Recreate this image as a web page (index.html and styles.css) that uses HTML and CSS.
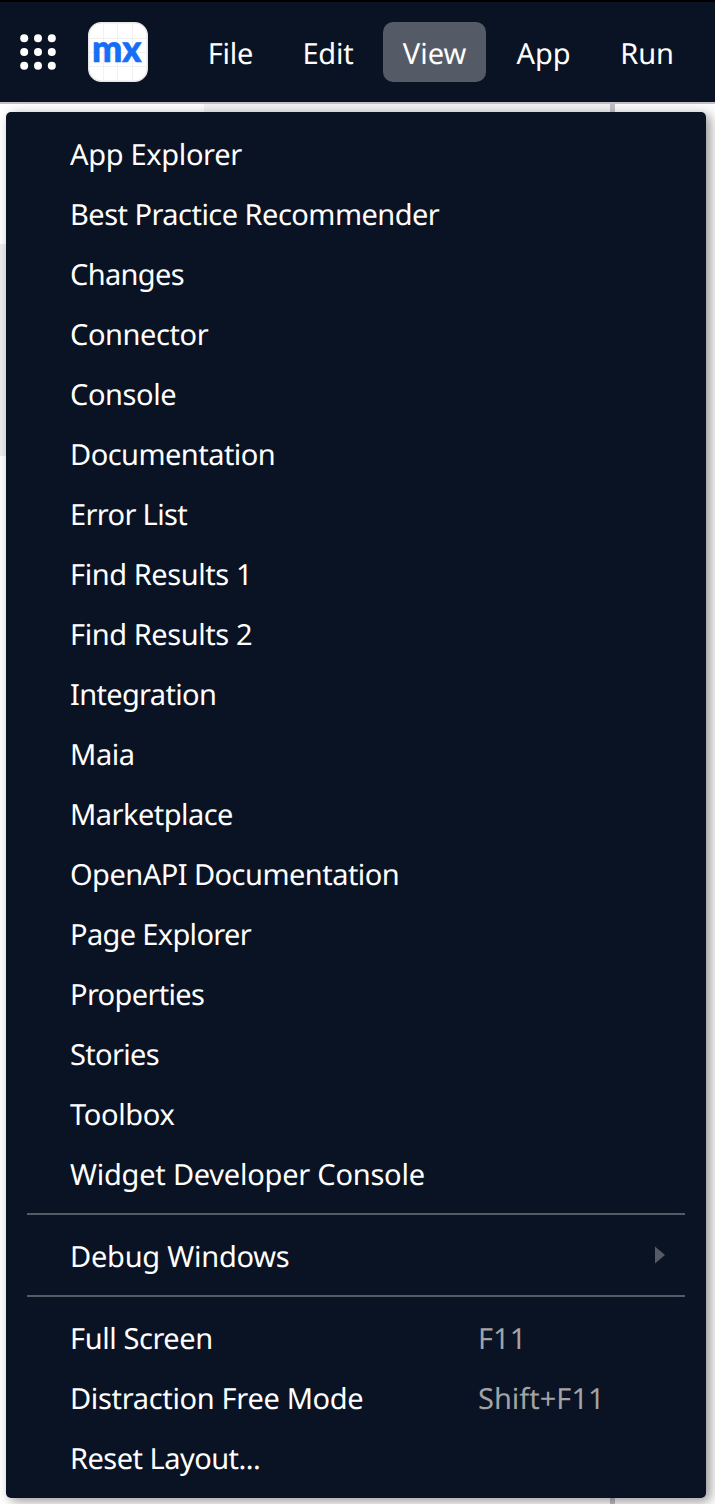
FILE: index.html
```html
<!DOCTYPE html>
<html lang="en">
<head>
<meta charset="utf-8">
<title>View menu</title>
<link rel="stylesheet" href="styles.css">
</head>
<body>
<div class="window">
  <header class="bar">
    <svg class="grid-icon" width="36" height="36" viewBox="0 0 36 36" fill="#fff">
      <circle cx="4.2" cy="4.2" r="4"/><circle cx="18" cy="4.2" r="4"/><circle cx="31.8" cy="4.2" r="4"/>
      <circle cx="4.2" cy="18" r="4"/><circle cx="18" cy="18" r="4"/><circle cx="31.8" cy="18" r="4"/>
      <circle cx="4.2" cy="31.8" r="4"/><circle cx="18" cy="31.8" r="4"/><circle cx="31.8" cy="31.8" r="4"/>
    </svg>
    <svg class="logo" width="60" height="60" viewBox="0 0 60 60">
      <rect x="0.75" y="0.75" width="58.5" height="58.5" rx="12.5" fill="#fff" stroke="#e6e6e6" stroke-width="1.5"/>
      <path d="M15.5 1.5v57M29.5 1.5v57M44.5 1.5v57M1.5 16.5h57M1.5 30.5h57M1.5 44.5h57" stroke="#f1f1f1" fill="none"/>
      <text class="logo-text" x="4" y="39.5" textLength="49.5" lengthAdjust="spacingAndGlyphs">mx</text>
    </svg>
    <nav class="tabs">
      <span class="tab file">File</span><span class="tab edit">Edit</span><span class="tab view">View</span><span class="tab app">App</span><span class="tab run">Run</span>
    </nav>
  </header>
  <main class="workspace">
    <div class="side"><div class="side-top"></div><div class="side-mid"></div></div>
    <div class="center"></div>
    <div class="splitter"></div>
    <div class="right"></div>
  </main>
  <div class="menu">
    <div class="item t3"><span>App Explorer</span></div>
    <div class="item t5"><span>Best Practice Recommender</span></div>
    <div class="item t6"><span>Changes</span></div>
    <div class="item t4"><span>Connector</span></div>
    <div class="item t4"><span>Console</span></div>
    <div class="item t5"><span>Documentation</span></div>
    <div class="item t6"><span>Error List</span></div>
    <div class="item t4"><span>Find Results 1</span></div>
    <div class="item t4"><span>Find Results 2</span></div>
    <div class="item t6"><span>Integration</span></div>
    <div class="item t4"><span>Maia</span></div>
    <div class="item t5"><span>Marketplace</span></div>
    <div class="item t5"><span>OpenAPI Documentation</span></div>
    <div class="item t6"><span>Page Explorer</span></div>
    <div class="item t6"><span>Properties</span></div>
    <div class="item t6"><span>Stories</span></div>
    <div class="item t3"><span>Toolbox</span></div>
    <div class="item t2"><span>Widget Developer Console</span></div>
    <div class="separator"></div>
    <div class="item t2"><span>Debug Windows</span><svg class="arrow" width="10" height="18" viewBox="0 0 10 18"><path d="M0 0.5L10 9L0 17.5z" fill="#555b66"/></svg></div>
    <div class="separator"></div>
    <div class="item"><span class="label t4">Full Screen</span><span class="key">F11</span></div>
    <div class="item"><span class="label t3">Distraction Free Mode</span><span class="key">Shift+F11</span></div>
    <div class="item t5"><span>Reset Layout...</span></div>
  </div>
</div>
</body>
</html>
```
FILE: styles.css
```css
* { box-sizing: border-box; }
body { margin: 0; font-family: "Noto Sans", sans-serif; font-size: 29px; color: #fff; text-rendering: geometricPrecision; }
.window { position: relative; height: 1504px; display: flex; flex-direction: column; overflow: hidden; }
.bar { height: 104px; flex: none; display: flex; align-items: center; background: #0a1323; border-top: 2px solid #000; border-bottom: 2px solid #c2bfc8; padding-left: 20px; }
.grid-icon { display: block; margin-right: 32px; }
.logo { display: block; margin-right: 40px; }
.logo-text { font-family: Lato, sans-serif; font-weight: 900; font-size: 37.5px; fill: #146ff6; stroke: #146ff6; stroke-width: 0.7; }
.tabs { display: flex; letter-spacing: -0.2px; }
.tab { height: 60px; line-height: 64px; border-radius: 10px; text-align: center; white-space: nowrap; }
.file { width: 85px; }
.edit { width: 90px; margin-left: 10px; }
.view { width: 103px; margin-left: 10px; background: #555b66; letter-spacing: 0; }
.app { width: 95px; margin-left: 10px; letter-spacing: 0; }
.run { width: 92px; margin-left: 10px; }
.workspace { flex: 1; display: flex; background: #fff; }
.side { width: 204px; }
.side-top { height: 140px; }
.side-mid { height: 212px; background: #eee; }
.center { width: 406px; background: linear-gradient(#f2f2f2 0 1300px, #fff 1300px); }
.splitter { width: 5px; background: #c2bfc8; }
.right { flex: 1; background: #fcfcfc; }
.menu { position: absolute; left: 6px; top: 112px; width: 700px; height: 1386px; padding: 12px 21px 10px; background: #0a1323; border-radius: 5px; box-shadow: 4px 3px 12px rgba(0,0,0,.42); }
.item { height: 60px; line-height: 56px; padding: 2px 20px 0 43px; display: flex; align-items: center; white-space: nowrap; }
.separator { height: 22px; padding-top: 9px; }
.separator::before { content: ""; display: block; height: 2px; background: #555b66; }
.arrow { margin-left: auto; margin-top: -4px; }
.label { width: 408px; }
.key { color: #a3a3a6; }
.t2 { letter-spacing: -0.23px; }
.t3 { letter-spacing: -0.33px; }
.t4 { letter-spacing: -0.42px; }
.t5 { letter-spacing: -0.53px; }
.t6 { letter-spacing: -0.66px; }
```
